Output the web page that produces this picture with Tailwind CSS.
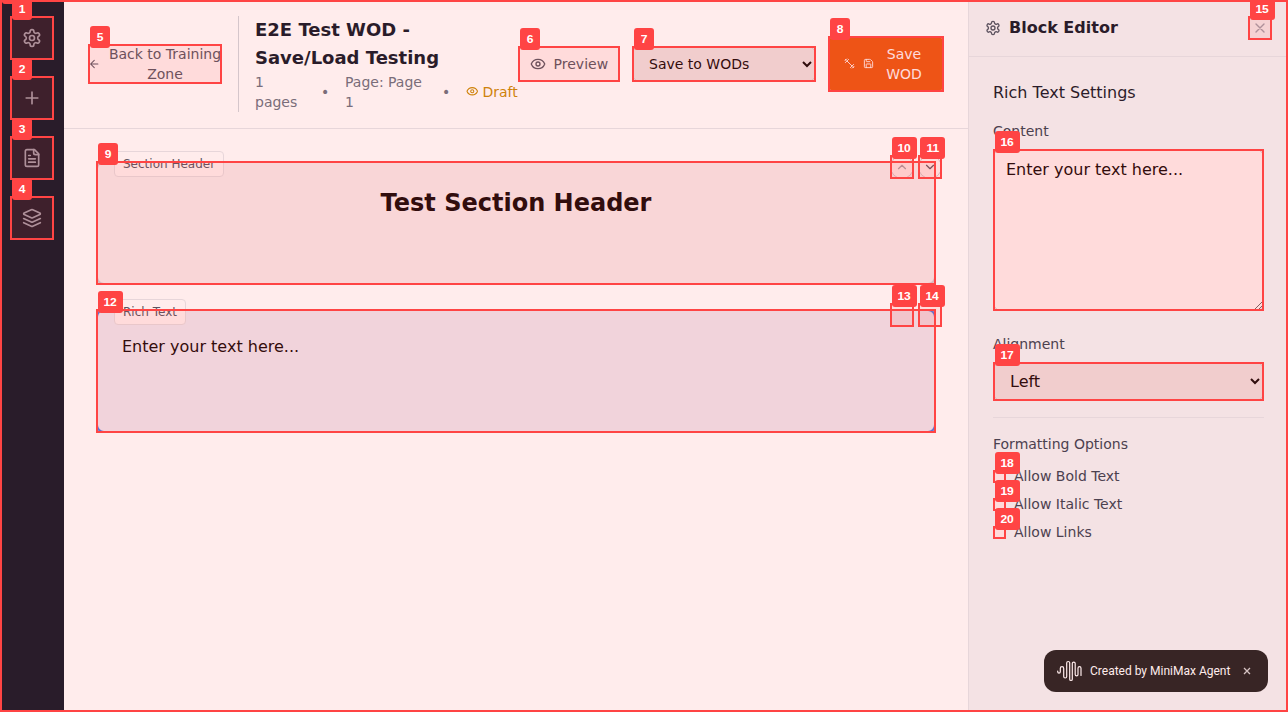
<!DOCTYPE html>
<html lang="en">
<head>
<meta charset="utf-8">
<title>WOD Editor</title>
<script src="https://cdn.jsdelivr.net/npm/@tailwindcss/browser@4"></script>
</head>
<body class="relative h-[712px] w-[1288px] overflow-hidden bg-white font-['DejaVu_Sans',sans-serif] text-black">
<svg class="hidden">
  <symbol id="gear" viewBox="0 0 24 24"><path d="M12.22 2h-.44a2 2 0 0 0-2 2v.18a2 2 0 0 1-1 1.73l-.43.25a2 2 0 0 1-2 0l-.15-.08a2 2 0 0 0-2.73.73l-.22.38a2 2 0 0 0 .73 2.73l.15.1a2 2 0 0 1 1 1.72v.51a2 2 0 0 1-1 1.74l-.15.09a2 2 0 0 0-.73 2.73l.22.38a2 2 0 0 0 2.73.73l.15-.08a2 2 0 0 1 2 0l.43.25a2 2 0 0 1 1 1.73V20a2 2 0 0 0 2 2h.44a2 2 0 0 0 2-2v-.18a2 2 0 0 1 1-1.73l.43-.25a2 2 0 0 1 2 0l.15.08a2 2 0 0 0 2.73-.73l.22-.39a2 2 0 0 0-.73-2.73l-.15-.08a2 2 0 0 1-1-1.74v-.5a2 2 0 0 1 1-1.74l.15-.09a2 2 0 0 0 .73-2.73l-.22-.38a2 2 0 0 0-2.73-.73l-.15.08a2 2 0 0 1-2 0l-.43-.25a2 2 0 0 1-1-1.73V4a2 2 0 0 0-2-2z"/><circle cx="12" cy="12" r="3"/></symbol>
  <symbol id="eye" viewBox="0 0 24 24"><path d="M2.062 12.348a1 1 0 0 1 0-.696 10.75 10.75 0 0 1 19.876 0 1 1 0 0 1 0 .696 10.75 10.75 0 0 1-19.876 0"/><circle cx="12" cy="12" r="3"/></symbol>
</svg>
<div class="flex h-full">
  <nav class="flex w-16 flex-none flex-col items-center gap-4 bg-[#111827] py-4 text-[#9ca3af]">
    <button class="flex size-11 items-center justify-center"><svg class="size-5" fill="none" stroke="currentColor" stroke-width="2" stroke-linecap="round" stroke-linejoin="round"><use href="#gear"/></svg></button>
    <button class="flex size-11 items-center justify-center"><svg class="size-5" viewBox="0 0 24 24" fill="none" stroke="currentColor" stroke-width="2" stroke-linecap="round" stroke-linejoin="round"><path d="M5 12h14M12 5v14"/></svg></button>
    <button class="flex size-11 items-center justify-center"><svg class="size-5" viewBox="0 0 24 24" fill="none" stroke="currentColor" stroke-width="2" stroke-linecap="round" stroke-linejoin="round"><path d="M15 2H6a2 2 0 0 0-2 2v16a2 2 0 0 0 2 2h12a2 2 0 0 0 2-2V7Z"/><path d="M14 2v4a2 2 0 0 0 2 2h4M10 9H8M16 13H8M16 17H8"/></svg></button>
    <button class="flex size-11 items-center justify-center"><svg class="size-5" viewBox="0 0 24 24" fill="none" stroke="currentColor" stroke-width="2" stroke-linecap="round" stroke-linejoin="round"><path d="m12.83 2.18a2 2 0 0 0-1.66 0L2.6 6.08a1 1 0 0 0 0 1.83l8.58 3.91a2 2 0 0 0 1.66 0l8.58-3.9a1 1 0 0 0 0-1.83Z"/><path d="m22 17.65-9.17 4.16a2 2 0 0 1-1.66 0L2 17.65"/><path d="m22 12.65-9.17 4.16a2 2 0 0 1-1.66 0L2 12.65"/></svg></button>
  </nav>

  <main class="flex w-[904px] flex-none flex-col">
    <header class="flex h-[129px] flex-none items-center border-b border-[#e5e7eb] px-6 pb-px text-sm">
      <button class="flex w-[134px] flex-none items-center gap-2 text-[#4b5563]">
        <svg class="h-4 w-[12.5px] flex-none" viewBox="0 0 24 24" fill="none" stroke="currentColor" stroke-width="2" stroke-linecap="round" stroke-linejoin="round"><path d="m12 19-7-7 7-7M19 12H5"/></svg>
        <span class="w-[113px] flex-none whitespace-nowrap text-center">Back to Training<br>Zone</span>
      </button>
      <div class="ml-4 h-24 w-px flex-none bg-[#d1d5db]"></div>
      <div class="ml-4 w-[263px] flex-none">
        <h1 class="text-lg/7 font-bold text-[#111827]">E2E Test WOD -<br>Save/Load Testing</h1>
        <div class="flex items-center whitespace-nowrap text-[#6b7280]">
          <span class="w-[66px]">1<br>pages</span>
          <span class="w-6">•</span>
          <span class="w-[97px]">Page: Page<br>1</span>
          <span class="w-[24.4px]">•</span>
          <span class="flex items-center gap-[3.5px] text-[#ca8a04]"><svg class="size-[12.5px]" fill="none" stroke="currentColor" stroke-width="2" stroke-linecap="round" stroke-linejoin="round"><use href="#eye"/></svg>Draft</span>
        </div>
      </div>
      <button class="flex h-9 w-[102px] flex-none items-center gap-2 pl-[11.6px] text-[#4b5563]"><svg class="size-4" fill="none" stroke="currentColor" stroke-width="2" stroke-linecap="round" stroke-linejoin="round"><use href="#eye"/></svg>Preview</button>
      <select class="ml-3 h-9 w-[184px] flex-none rounded-lg border border-[#d1d5db] bg-[#efefef] px-3 text-sm"><option>Save to WODs</option></select>
      <button class="ml-3 flex h-14 w-[116px] flex-none items-center rounded-lg bg-[#ea580c] pl-4 text-white">
        <svg class="mr-2 size-[11px] flex-none" viewBox="0 0 24 24" fill="none" stroke="currentColor" stroke-width="2" stroke-linecap="round" stroke-linejoin="round"><path d="m6.500 6.500 11 11M21 21l-1-1M3 3l1 1M18 22l4-4M2 6l4-4M3 10l7-7M14 21l7-7"/></svg>
        <svg class="size-[11px] flex-none" viewBox="0 0 24 24" fill="none" stroke="currentColor" stroke-width="2" stroke-linecap="round" stroke-linejoin="round"><path d="M15.2 3a2 2 0 0 1 1.4.6l3.8 3.8a2 2 0 0 1 .6 1.4V19a2 2 0 0 1-2 2H5a2 2 0 0 1-2-2V5a2 2 0 0 1 2-2zM17 21v-7a1 1 0 0 0-1-1H8a1 1 0 0 0-1 1v7M7 3v4a1 1 0 0 0 1 1h7"/></svg>
        <span class="ml-[11px] w-[38px] text-center">Save<br>WOD</span>
      </button>
    </header>

    <div class="flex flex-col gap-6 px-8 pt-8">
      <section class="relative h-[124px] rounded-lg border-2 border-[#d1d5db] bg-[#f9fafb] pt-6 text-center">
        <h2 class="text-2xl/8 font-bold">Test Section Header</h2>
        <span class="absolute left-4 top-[-12px] rounded border border-[#e5e7eb] bg-white px-2 py-1 text-xs text-[#4b5563]">Section Header</span>
        <div class="absolute right-[-8px] top-[-8px] flex gap-1">
          <button class="flex size-6 items-center justify-center rounded-full border border-[#d1d5db] bg-white text-[#4b5563]"><svg class="size-3.5 opacity-50" viewBox="0 0 24 24" fill="none" stroke="currentColor" stroke-width="2" stroke-linecap="round" stroke-linejoin="round"><path d="m18 15-6-6-6 6"/></svg></button>
          <button class="flex size-6 items-center justify-center rounded-full border border-[#d1d5db] bg-white text-[#4b5563]"><svg class="size-3.5" viewBox="0 0 24 24" fill="none" stroke="currentColor" stroke-width="2" stroke-linecap="round" stroke-linejoin="round"><path d="m6 9 6 6 6-6"/></svg></button>
        </div>
      </section>
      <section class="relative h-[124px] rounded-lg border-2 border-[#3b82f6] bg-[#eff6ff] px-6 pt-6">
        <p>Enter your text here...</p>
        <span class="absolute left-4 top-[-12px] rounded border border-[#e5e7eb] bg-white px-2 py-1 text-xs text-[#4b5563]">Rich Text</span>
      </section>
    </div>
  </main>

  <aside class="w-80 flex-none border-l border-[#e5e7eb] bg-[#f3f4f6]">
    <div class="flex h-[57px] items-center gap-2 border-b border-[#e5e7eb] px-4">
      <svg class="size-4 text-[#4b5563]" fill="none" stroke="currentColor" stroke-width="2" stroke-linecap="round" stroke-linejoin="round"><use href="#gear"/></svg>
      <h2 class="flex-1 font-bold text-[#111827]">Block Editor</h2>
      <button class="mr-1 text-[#9ca3af]"><svg class="size-4" viewBox="0 0 24 24" fill="none" stroke="currentColor" stroke-width="2" stroke-linecap="round"><path d="M18 6 6 18M6 6l12 12"/></svg></button>
    </div>
    <div class="px-6 pt-6 text-sm text-[#374151]">
      <h3 class="text-base text-[#111827]">Rich Text Settings</h3>
      <label class="mt-4 block">Content</label>
      <textarea class="mt-2 block h-[162px] w-[271px] rounded-lg border border-[#d1d5db] bg-white px-3 py-2 text-base text-black">Enter your text here...</textarea>
      <label class="mt-[23px] block">Alignment</label>
      <select class="mt-2 block h-[39px] w-[271px] rounded-lg border border-[#d1d5db] bg-[#efefef] px-3 text-base text-black"><option>Left</option></select>
      <div class="mt-4 w-[271px] border-t border-[#e5e7eb] pt-4">
        <h4 class="mb-3">Formatting Options</h4>
        <div class="flex flex-col gap-2">
          <label class="flex items-center gap-2"><input type="checkbox" class="size-[13px]">Allow Bold Text</label>
          <label class="flex items-center gap-2"><input type="checkbox" class="size-[13px]">Allow Italic Text</label>
          <label class="flex items-center gap-2"><input type="checkbox" class="size-[13px]">Allow Links</label>
        </div>
      </div>
    </div>
  </aside>
</div>

<div class="absolute left-[1044px] top-[650px] flex h-[42px] w-56 items-center rounded-xl bg-[#222222] pl-[13px] font-[Roboto,sans-serif] text-xs text-white">
  <svg class="h-6 w-[25px] flex-none" viewBox="0 0 25 24" fill="none" stroke="currentColor" stroke-width="1.2" stroke-linecap="round" stroke-linejoin="round"><path d="M.7 12v.8a1.3 1.3 0 0 0 2.6 0V9.400a1.700 1.700 0 0 1 3.400 0v8.100a1.500 1.500 0 0 0 3 0V4a1.500 1.500 0 0 1 3 0v16.200a1.300 1.300 0 0 0 2.600 0V4.500a1.450 1.450 0 0 1 2.900 0v11a1.400 1.400 0 0 0 2.800 0V9.200a1.500 1.500 0 0 1 3 0V16.500"/></svg>
  <span class="ml-2 w-[140px] whitespace-nowrap">Created by MiniMax Agent</span>
  <svg class="ml-[13px] size-2 opacity-80" viewBox="0 0 8 8" fill="none" stroke="currentColor" stroke-width="1.3"><path d="m1 1 6 6M7 1 1 7"/></svg>
</div>

<div id="marks" class="pointer-events-none absolute inset-0 z-10 overflow-hidden"></div>
<script>
  // Numbered element markers: x, y, width, height; the index is the label.
  const boxes = [[0,0,1288,712],[10,16,44,44],[10,76,44,44],[10,136,44,44],[10,196,44,44],[88,44,134,40],[518,46,102,36],[632,46,184,36],[828,36,116,56],[96,161,840,124],[890,155,24,24],[918,155,24,24],[96,309,840,124],[890,303,24,24],[918,303,24,24],[1248,16,24,24],[993,149,271,162],[993,362,271,39],[993,470,13,13],[993,498,13,13],[993,526,13,13]];
  const root = document.getElementById('marks');
  boxes.forEach(([x, y, w, h], i) => {
    const b = document.createElement('div');
    b.className = 'absolute border-2 border-[#ff4444] bg-[#ff4444]/10';
    b.style.cssText = `left:${x}px;top:${y}px;width:${w}px;height:${h}px`;
    const t = document.createElement('span');
    t.className = "absolute left-0 top-[-20px] z-10 h-[22px] rounded-[3px] bg-[#ff4444] text-center font-['Liberation_Sans',sans-serif] text-[11px]/[22px] font-bold text-white";
    t.style.width = i > 9 ? '25px' : '20px';
    const n = document.createElement('span');
    n.className = 'inline-block scale-x-110';
    n.textContent = i;
    t.append(n);
    b.append(t);
    root.append(b);
  });
</script>
</body>
</html>
